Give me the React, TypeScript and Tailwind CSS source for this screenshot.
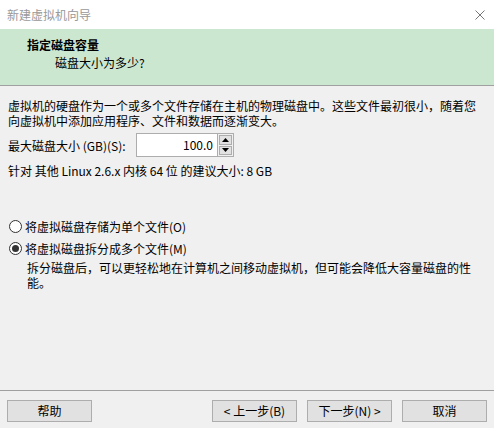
import React from "react";

const font = { fontFamily: '"Noto Sans CJK SC", "Noto Sans", sans-serif' };

function Radio({ checked, label }: { checked?: boolean; label: string }) {
  return (
    <div className="flex items-center h-[22px]">
      <span className="ml-[9px] w-[13px] h-[13px] rounded-full border border-[#333333] bg-white flex items-center justify-center">
        {checked && <span className="w-[7px] h-[7px] rounded-full bg-[#333333]" />}
      </span>
      <span className="ml-[3px] leading-[15px]">{label}</span>
    </div>
  );
}

function Btn({ children }: { children: React.ReactNode }) {
  return (
    <div className="w-[85px] h-[22px] bg-[#e1e1e1] border border-[#adadad] flex items-center justify-center text-[12px] text-black leading-none">
      {children}
    </div>
  );
}

export default function App() {
  return (
    <div
      className="w-[494px] h-[428px] bg-[#f0f0f0] flex flex-col text-[12px] text-black overflow-hidden"
      style={font}
    >
      {/* Title bar */}
      <div className="h-[29px] bg-white flex items-center justify-between shrink-0">
        <span className="ml-[7px] text-[#999999] text-[12px]">新建虚拟机向导</span>
        <svg width="10" height="10" viewBox="0 0 10 10" className="mr-[9px]">
          <path d="M0.5 0.5 L9.5 9.5 M9.5 0.5 L0.5 9.5" stroke="#777" strokeWidth="1" />
        </svg>
      </div>
      {/* Header band */}
      <div className="h-[57px] bg-[#cce7d0] border-b border-[#a0a0a0] shrink-0 flex flex-col">
        <div className="ml-[27px] mt-[8px] font-bold leading-[15px]">指定磁盘容量</div>
        <div className="ml-[55px] mt-[3px] leading-[15px]">磁盘大小为多少?</div>
      </div>
      {/* Content */}
      <div className="flex-1 flex flex-col">
        <div className="ml-[8px] mt-[12px] leading-[15px] whitespace-nowrap">
          虚拟机的硬盘作为一个或多个文件存储在主机的物理磁盘中。这些文件最初很小，随着您
          <br />
          向虚拟机中添加应用程序、文件和数据而逐渐变大。
        </div>
        <div className="ml-[8px] mt-[5px] flex items-center h-[24px]">
          <span className="w-[128px] leading-[15px]">最大磁盘大小 (GB)(S):</span>
          <div className="flex items-stretch h-[24px]">
            <div className="w-[81px] bg-white border border-[#adadad] border-r-0 flex items-center justify-end pr-[4px]">
              100.0
            </div>
            <div className="w-[17px] bg-[#f0f0f0] border border-[#adadad] flex flex-col p-[1px] gap-[1px]">
              <div className="flex-1 bg-[#e1e1e1] border border-[#adadad] flex items-center justify-center">
                <svg width="7" height="4" viewBox="0 0 7 4"><path d="M3.5 0 L7 4 L0 4 Z" fill="#000" /></svg>
              </div>
              <div className="flex-1 bg-[#e1e1e1] border border-[#adadad] flex items-center justify-center">
                <svg width="7" height="4" viewBox="0 0 7 4"><path d="M0 0 L7 0 L3.5 4 Z" fill="#000" /></svg>
              </div>
            </div>
          </div>
        </div>
        <div className="ml-[8px] mt-[6px] leading-[15px]">
          针对 其他 Linux 2.6.x 内核 64 位 的建议大小: 8 GB
        </div>
        <div className="mt-[37px] flex flex-col">
          <Radio label="将虚拟磁盘存储为单个文件(O)" />
          <Radio checked label="将虚拟磁盘拆分成多个文件(M)" />
          <div className="ml-[27px] mt-[1px] leading-[15px] whitespace-nowrap">
            拆分磁盘后，可以更轻松地在计算机之间移动虚拟机，但可能会降低大容量磁盘的性
            <br />
            能。
          </div>
        </div>
      </div>
      {/* Footer */}
      <div className="h-[38px] shrink-0 border-t border-[#a0a0a0] flex items-start justify-between px-[7px] pt-[9px]">
        <Btn>帮助</Btn>
        <div className="flex gap-[10px]">
          <Btn>&lt; 上一步(B)</Btn>
          <Btn>下一步(N) &gt;</Btn>
          <Btn>取消</Btn>
        </div>
      </div>
    </div>
  );
}
